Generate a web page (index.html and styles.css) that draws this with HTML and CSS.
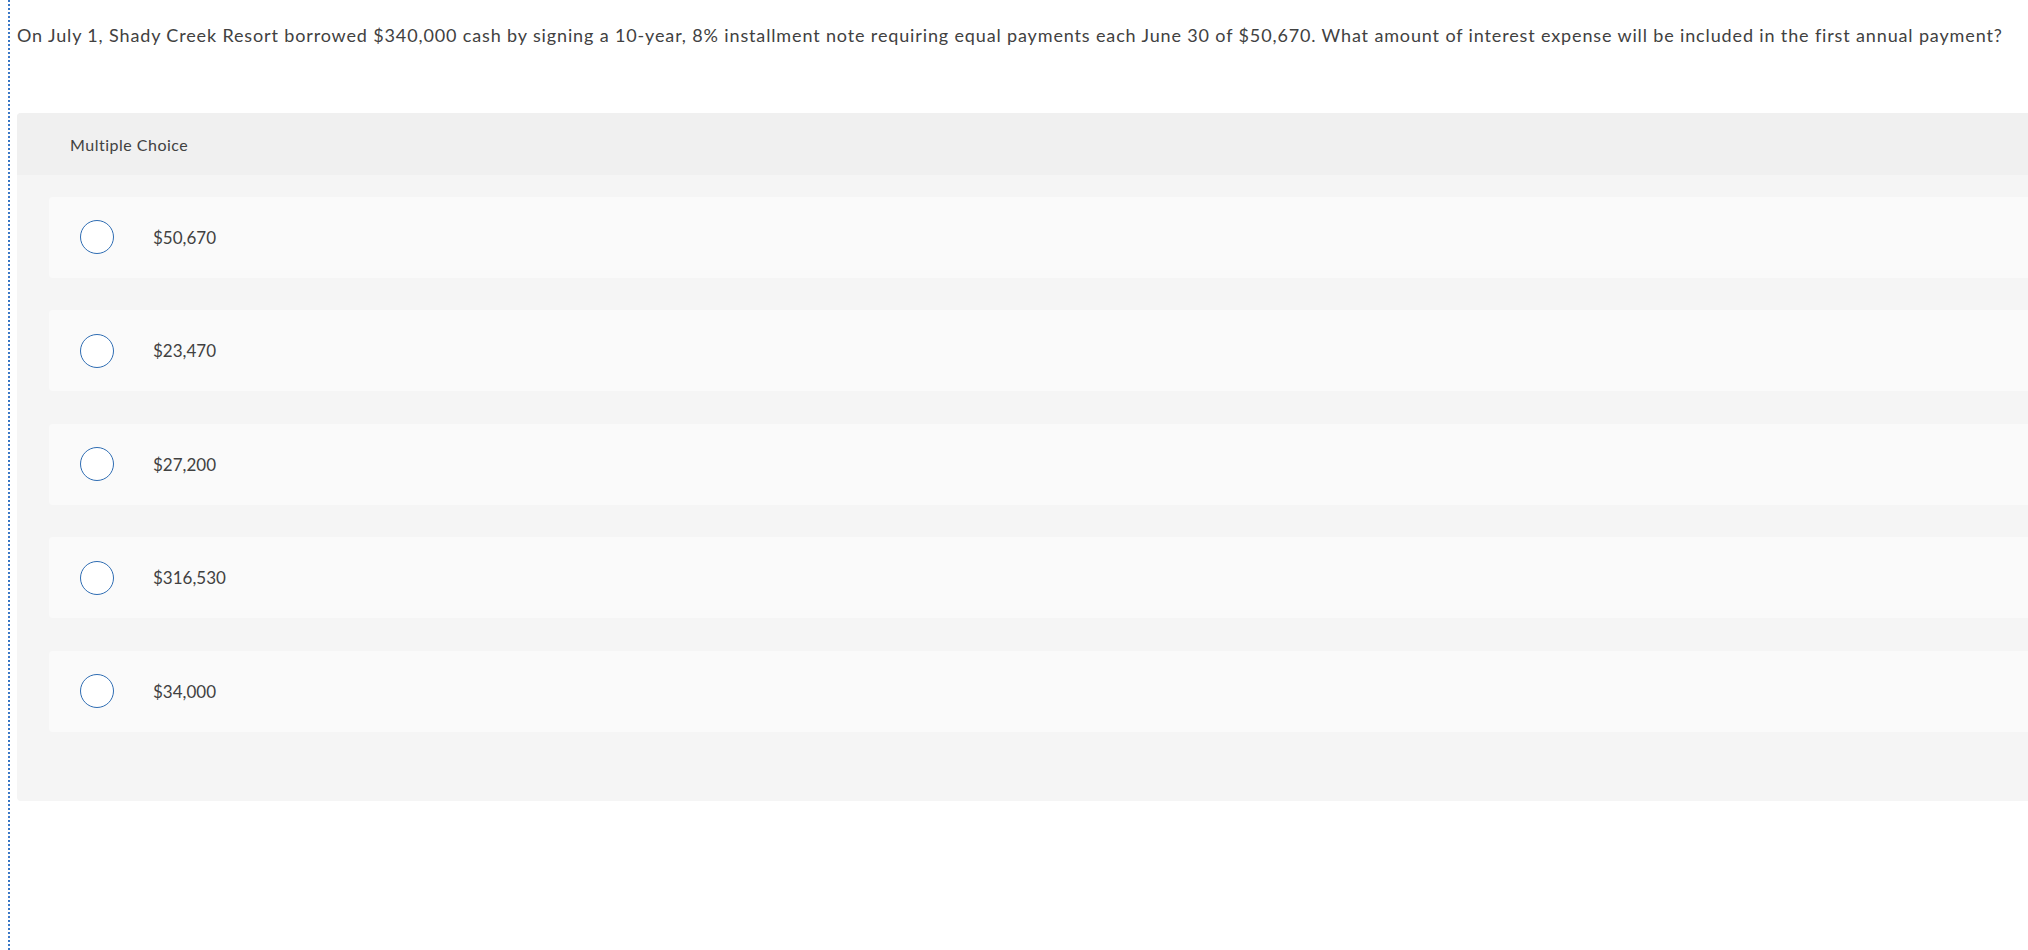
FILE: index.html
```html
<!DOCTYPE html>
<html lang="en">
<head>
<meta charset="utf-8">
<title>Multiple Choice</title>
<link rel="stylesheet" href="styles.css">
</head>
<body>
<div class="frame">
  <p class="question">On July 1, Shady Creek Resort borrowed $340,000 cash by signing a 10-year, 8% installment note requiring equal payments each June 30 of $50,670. What amount of interest expense will be included in the first annual payment?</p>
  <section class="panel">
    <div class="panel-head">Multiple Choice</div>
    <div class="panel-body">
      <label class="choice"><span class="radio"></span><span class="choice-text">$50,670</span></label>
      <label class="choice"><span class="radio"></span><span class="choice-text">$23,470</span></label>
      <label class="choice"><span class="radio"></span><span class="choice-text">$27,200</span></label>
      <label class="choice"><span class="radio"></span><span class="choice-text">$316,530</span></label>
      <label class="choice"><span class="radio"></span><span class="choice-text">$34,000</span></label>
    </div>
  </section>
</div>
</body>
</html>
```
FILE: styles.css
```css
html, body {
  margin: 0;
  padding: 0;
  background: #ffffff;
}
body {
  font-family: "Lato", "Open Sans", sans-serif;
  font-weight: 400;
  color: #414141;
  overflow: hidden;
}
.frame {
  margin-left: 8px;
  min-height: 950px;
  border-left: 2px dotted #3a77c6;
  padding-left: 7px;
  box-sizing: border-box;
}
.question {
  margin: 0;
  padding-top: 22.5px;
  font-size: 18px;
  line-height: 25px;
  letter-spacing: 0.86px;
  white-space: nowrap;
}
.panel {
  margin-top: 65px;
  border-radius: 4px 0 0 4px;
  overflow: hidden;
  background: #f5f5f5;
}
.panel-head {
  height: 62px;
  display: flex;
  align-items: center;
  padding-left: 53px;
  padding-top: 1px;
  box-sizing: border-box;
  background: #f0f0f0;
  font-size: 16px;
  letter-spacing: 0.5px;
}
.panel-body {
  display: flex;
  flex-direction: column;
  gap: 32.5px;
  padding: 22px 0 69px 32px;
}
.choice {
  height: 81px;
  display: flex;
  align-items: center;
  padding-left: 31px;
  background: #fafafa;
  border-radius: 4px 0 0 4px;
}
.radio {
  width: 34px;
  height: 34px;
  box-sizing: border-box;
  border: 1.2px solid #2f6db3;
  border-radius: 50%;
  background: #ffffff;
  flex: none;
}
.choice-text {
  margin-left: 39px;
  font-size: 17px;
}
```
